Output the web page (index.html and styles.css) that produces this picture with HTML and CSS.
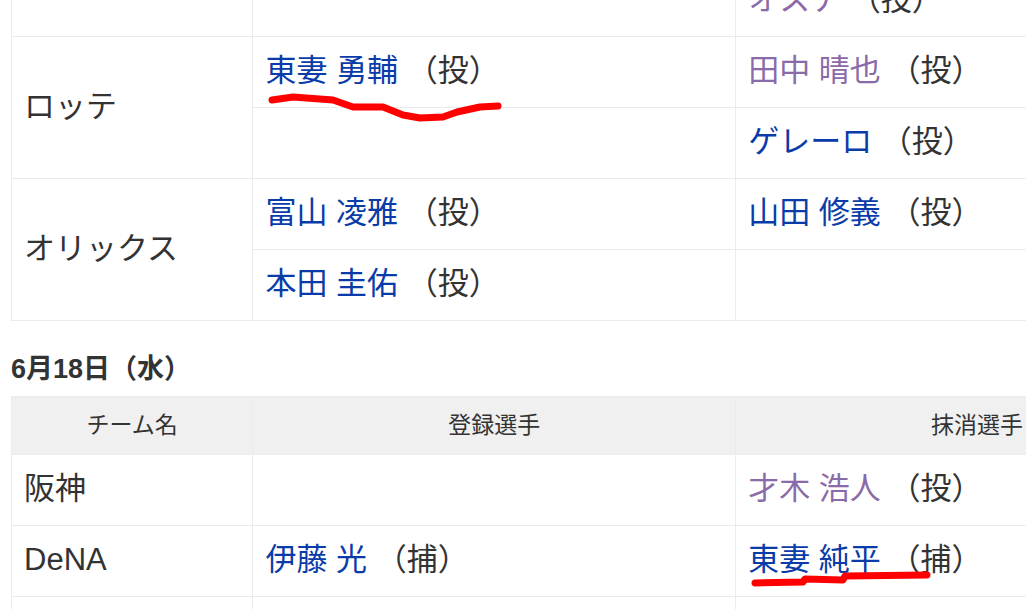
FILE: index.html
```html
<!DOCTYPE html>
<html>
  <head>
    <meta charset="utf-8">
    <title>出場選手登録・抹消</title>
    <link rel="stylesheet" href="styles.css">
  </head>
  <body>
    <div class="sheet">
      <table class="roster">
        <colgroup>
          <col class="col-team">
          <col class="col-player">
          <col class="col-player">
        </colgroup>
        <tr>
          <td class="team" rowspan="2">ヤクルト</td>
          <td></td>
          <td></td>
        </tr>
        <tr>
          <td></td>
          <td><a class="visited" href="#">オスナ</a> （投）</td>
        </tr>
        <tr>
          <td class="team" rowspan="2">ロッテ</td>
          <td><a href="#">東妻 勇輔</a> （投）</td>
          <td><a class="visited" href="#">田中 晴也</a> （投）</td>
        </tr>
        <tr>
          <td></td>
          <td><a href="#">ゲレーロ</a> （投）</td>
        </tr>
        <tr>
          <td class="team" rowspan="2">オリックス</td>
          <td><a href="#">富山 凌雅</a> （投）</td>
          <td><a href="#">山田 修義</a> （投）</td>
        </tr>
        <tr>
          <td><a href="#">本田 圭佑</a> （投）</td>
          <td></td>
        </tr>
      </table>

      <h3 class="day">6月18日（水）</h3>

      <table class="roster">
        <colgroup>
          <col class="col-team">
          <col class="col-player">
          <col class="col-player">
        </colgroup>
        <tr>
          <th>チーム名</th>
          <th>登録選手</th>
          <th>抹消選手</th>
        </tr>
        <tr>
          <td class="team">阪神</td>
          <td></td>
          <td><a class="visited" href="#">才木 浩人</a> （投）</td>
        </tr>
        <tr>
          <td class="team">DeNA</td>
          <td><a href="#">伊藤 光</a> （捕）</td>
          <td><a href="#">東妻 純平</a> （捕）</td>
        </tr>
        <tr>
          <td class="team"></td>
          <td></td>
          <td></td>
        </tr>
      </table>
    </div>

    <!-- hand drawn marks over the names -->
    <svg class="marks" width="1026" height="609" viewBox="0 0 1026 609">
      <path d="M272 100 L293 97 L333 100 L353 107 L383 107 L403 115 L420 118 L443 117 L457 112 L480 107 L498 106"
            fill="none" stroke="#ff0000" stroke-width="7" stroke-linecap="round" stroke-linejoin="round"/>
      <path d="M755 583 L803 582 L805 579 L843 580 L845 576 L927 575"
            fill="none" stroke="#ff0000" stroke-width="7" stroke-linecap="round" stroke-linejoin="round"/>
    </svg>
  </body>
</html>
```

FILE: styles.css
```css
html, body {
  margin: 0;
  padding: 0;
  overflow: hidden;
}

body {
  position: relative;
  height: 609px;
  background-color: #fff;
  color: #333;
  font-family: "Liberation Sans", "Noto Sans CJK JP", sans-serif;
}

.sheet {
  margin-top: -106px;
  padding-left: 11px;
}

.roster {
  width: 1208px;
  border-collapse: collapse;
  table-layout: fixed;
  border: 1px solid #ddd;
}

.col-team {
  width: 20%;
}

.col-player {
  width: 40%;
}

.roster td, .roster th {
  border: 1px solid #ebebeb;
}

.roster th {
  font-size: 23px;
  font-weight: normal;
  line-height: 35px;
  padding: 11px 12px;
  background-color: #f0f0f0;
  text-align: center;
}

.roster td {
  height: 48px;
  font-size: 31px;
  line-height: 48px;
  padding: 10px 12px 12px;
  text-align: left;
  white-space: nowrap;
}

.roster a {
  color: #0a3ca9;
  text-decoration: none;
}

.roster a.visited {
  color: #8a6aa8;
}

.day {
  font-size: 27px;
  font-weight: bold;
  line-height: 36px;
  margin: 30px 0 9px;
}

.marks {
  position: absolute;
  top: 0;
  left: 0;
  pointer-events: none;
}
```
